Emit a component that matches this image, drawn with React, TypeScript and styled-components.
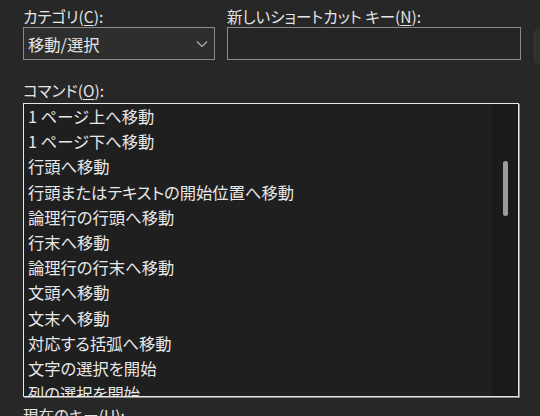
import React from 'react';
import styled, { createGlobalStyle } from 'styled-components';

const GlobalStyle = createGlobalStyle`
  html, body {
    margin: 0;
    padding: 0;
    background: #272727;
    overflow: hidden;
  }
  body {
    font-family: "Noto Sans CJK JP", "Noto Sans", sans-serif;
    font-feature-settings: "palt";
    color: #e6e6e6;
  }
`;

const Page = styled.div`
  width: 540px;
  height: 416px;
  padding: 6px 0 0 23px;
  box-sizing: border-box;
  overflow: hidden;
`;

const TopGrid = styled.div`
  display: grid;
  grid-template-columns: 192px 294px 80px;
  grid-template-rows: 20px 33px;
  column-gap: 12px;
  row-gap: 1px;
`;

const Label = styled.div<{ $top?: number }>`
  font-size: 15.5px;
  line-height: 20px;
  height: 20px;
  white-space: nowrap;
  margin-top: ${p => p.$top ?? 0}px;
  color: #e4e4e4;
`;

const Key = styled.u`
  text-underline-offset: 2px;
`;

const Combo = styled.div`
  height: 33px;
  box-sizing: border-box;
  border: 1px solid #8a8a8a;
  background: #2e2e2e;
  display: flex;
  align-items: center;
  justify-content: space-between;
  padding: 0 6px 0 4px;
  font-size: 16.3px;
`;

const TextBox = styled.div`
  height: 33px;
  box-sizing: border-box;
  border: 1px solid #8a8a8a;
  background: #252525;
`;

const SideButton = styled.div`
  align-self: start;
  height: 35px;
  margin-top: 2px;
  margin-left: 1px;
  box-sizing: border-box;
  border-radius: 4px;
  background: #2f2f2f;
  border: 1px solid #383838;
`;

const ListBox = styled.div`
  width: 496px;
  height: 294px;
  margin-top: 3px;
  box-sizing: border-box;
  border: 1px solid #e8e8e8;
  box-shadow: 1px 1px 0 0 #8c8c8c;
  background: #1f1f1f;
  display: flex;
`;

const Items = styled.div`
  flex: 1;
  overflow: hidden;
`;

const Item = styled.div`
  height: 25.2px;
  line-height: 25.2px;
  padding-left: 4px;
  font-size: 16.3px;
  white-space: nowrap;
  color: #e8e8e8;
`;

const Track = styled.div`
  width: 26px;
  background: #1a1a1a;
`;

const Thumb = styled.div`
  width: 5px;
  height: 55px;
  margin: 57px 0 0 11px;
  border-radius: 3px;
  background: #9b9b9b;
`;

const Chevron = () => (
  <svg width="12" height="8" viewBox="0 0 12 8" fill="none">
    <path d="M1 1.5 L6 6.5 L11 1.5" stroke="#b8b8b8" strokeWidth="1.1" />
  </svg>
);

const commands = [
  '1 ページ上へ移動',
  '1 ページ下へ移動',
  '行頭へ移動',
  '行頭またはテキストの開始位置へ移動',
  '論理行の行頭へ移動',
  '行末へ移動',
  '論理行の行末へ移動',
  '文頭へ移動',
  '文末へ移動',
  '対応する括弧へ移動',
  '文字の選択を開始',
  '列の選択を開始',
];

export default function App() {
  return (
    <Page>
      <GlobalStyle />
      <TopGrid>
        <Label>カテゴリ(<Key>C</Key>):</Label>
        <Label>新しいショートカット キー(<Key>N</Key>):</Label>
        <div />
        <Combo>
          <span>移動/選択</span>
          <Chevron />
        </Combo>
        <TextBox />
        <SideButton />
      </TopGrid>
      <Label $top={20}>コマンド(<Key>O</Key>):</Label>
      <ListBox>
        <Items>
          {commands.map(c => (
            <Item key={c}>{c}</Item>
          ))}
        </Items>
        <Track>
          <Thumb />
        </Track>
      </ListBox>
      <Label $top={8}>現在のキー(<Key>U</Key>):</Label>
    </Page>
  );
}
